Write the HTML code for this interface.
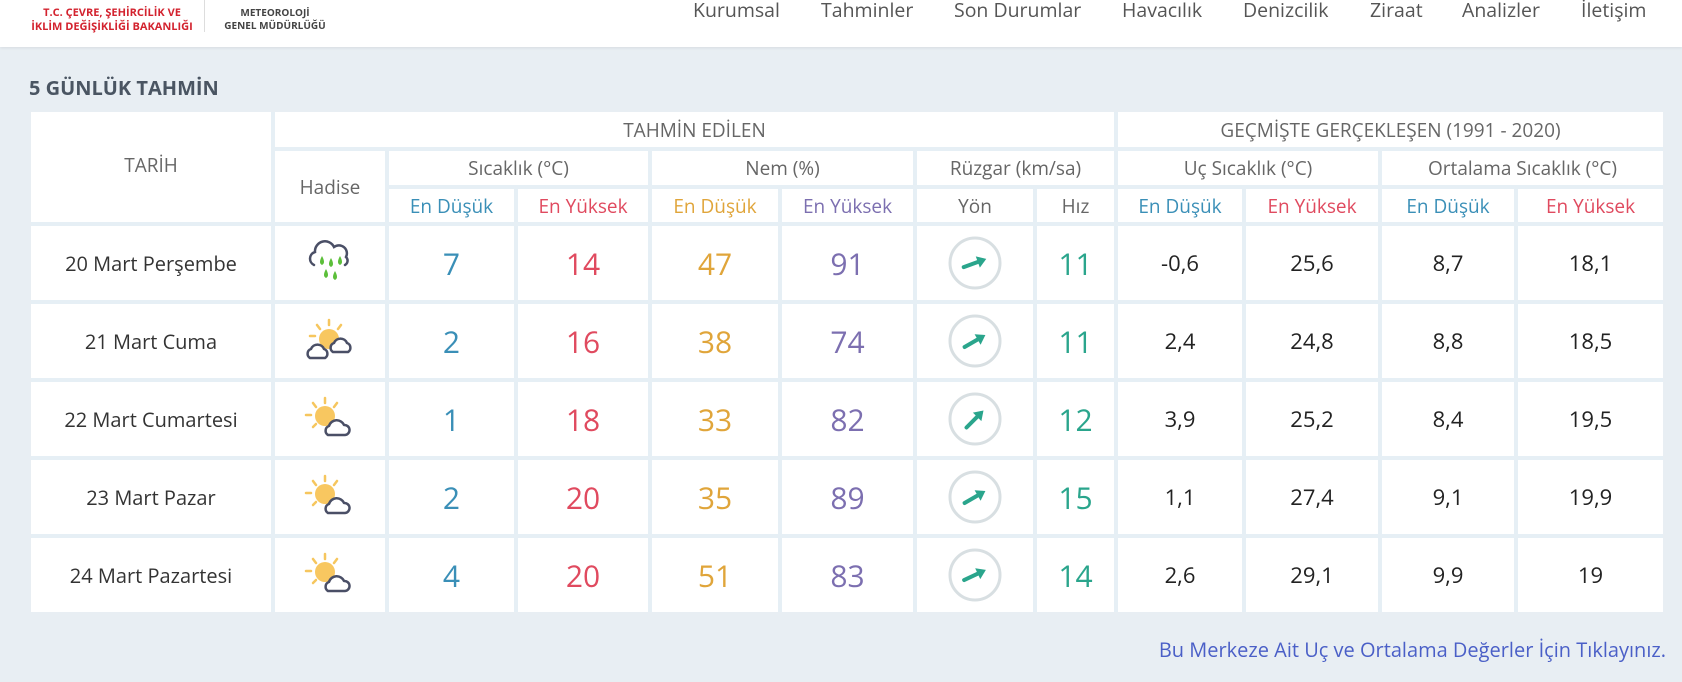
<!DOCTYPE html>
<html><head><meta charset="utf-8">
<style>
*{margin:0;padding:0;box-sizing:border-box}
body{width:1682px;height:682px;overflow:hidden;background:#e8eef3;font-family:"Open Sans","Liberation Sans",sans-serif;position:relative}
.hdr{position:absolute;left:0;top:0;width:1682px;height:47px;background:#fff;box-shadow:0 1px 3px rgba(0,0,0,.08)}
.logo1{position:absolute;left:22px;top:6px;color:#d3232f;font-weight:bold;font-size:11px;line-height:14px;text-align:center;width:180px;white-space:nowrap}
.sep{position:absolute;left:204px;top:0;width:1px;height:32px;background:#ddd}
.logo2{position:absolute;left:220px;top:6px;color:#444;font-weight:bold;font-size:10px;line-height:13px;text-align:center;width:110px;white-space:nowrap}
.nav{position:absolute;top:-4px;font-size:19.5px;color:#555}
.title{position:absolute;left:29px;top:74px;font-size:20px;font-weight:bold;color:#4a5562}
.grid{position:absolute;left:31px;top:112px;display:grid;
grid-template-columns:240px 110px 125px 130px 126px 131px 116px 77px 124px 132px 132px 145px;
grid-template-rows:35px 34px 33px 74px 74px 74px 74px 74px;column-gap:4px;row-gap:4px;background:#e6eff5}
.grid>div{background:#fff;display:flex;align-items:center;justify-content:center;color:#666;font-size:19px}
.b{color:#3a8fb7!important}.r{color:#e04a5f!important}.y{color:#e0a53a!important}.p{color:#7c6fb0!important}.t{color:#2aa58c!important}
.n{font-size:30px!important}
.k{color:#222!important;font-size:22px!important}
.dt{color:#333!important;font-size:20px!important}
.link{position:absolute;right:16px;top:636px;color:#4a5fc7;font-size:20px}
</style></head><body>
<div class="hdr">
<div class="logo1">T.C. ÇEVRE, ŞEHİRCİLİK VE<br>İKLİM DEĞİŞİKLİĞİ BAKANLIĞI</div>
<div class="sep"></div>
<div class="logo2">METEOROLOJİ<br>GENEL MÜDÜRLÜĞÜ</div>
<div class="nav" style="left:693px">Kurumsal</div>
<div class="nav" style="left:821px">Tahminler</div>
<div class="nav" style="left:954px">Son Durumlar</div>
<div class="nav" style="left:1122px">Havacılık</div>
<div class="nav" style="left:1243px">Denizcilik</div>
<div class="nav" style="left:1370px">Ziraat</div>
<div class="nav" style="left:1462px">Analizler</div>
<div class="nav" style="left:1581px">İletişim</div>
</div>
<div class="title">5 GÜNLÜK TAHMİN</div>
<div class="grid">
<div style="grid-column:1;grid-row:1/4;padding-bottom:4px">TARİH</div>
<div style="grid-column:2/9;grid-row:1">TAHMİN EDİLEN</div>
<div style="grid-column:9/13;grid-row:1">GEÇMİŞTE GERÇEKLEŞEN (1991 - 2020)</div>
<div style="grid-column:2;grid-row:2/4">Hadise</div>
<div style="grid-column:3/5;grid-row:2">Sıcaklık (°C)</div>
<div style="grid-column:5/7;grid-row:2">Nem (%)</div>
<div style="grid-column:7/9;grid-row:2">Rüzgar (km/sa)</div>
<div style="grid-column:9/11;grid-row:2">Uç Sıcaklık (°C)</div>
<div style="grid-column:11/13;grid-row:2">Ortalama Sıcaklık (°C)</div>
<div style="grid-column:3;grid-row:3" class="b">En Düşük</div>
<div style="grid-column:4;grid-row:3" class="r">En Yüksek</div>
<div style="grid-column:5;grid-row:3" class="y">En Düşük</div>
<div style="grid-column:6;grid-row:3" class="p">En Yüksek</div>
<div style="grid-column:7;grid-row:3">Yön</div>
<div style="grid-column:8;grid-row:3">Hız</div>
<div style="grid-column:9;grid-row:3" class="b">En Düşük</div>
<div style="grid-column:10;grid-row:3" class="r">En Yüksek</div>
<div style="grid-column:11;grid-row:3" class="b">En Düşük</div>
<div style="grid-column:12;grid-row:3" class="r">En Yüksek</div>

<div class="dt">20 Mart Perşembe</div>
<div><svg width="60" height="56" viewBox="0 0 60 56"><path d="M14 30 a7 7 0 0 1 1-13 a10 10 0 0 1 19-5 a8 8 0 0 1 12 10 a5 5 0 0 1 -1 8" fill="none" stroke="#4a4f66" stroke-width="2.5" stroke-linecap="round"/><path d="M22 21 q-4 7 0 9 q4-2 0-9z M31 23 q-4 7 0 9 q4-2 0-9z M40 21 q-4 7 0 9 q4-2 0-9z M26 34 q-4 7 0 9 q4-2 0-9z M35 36 q-4 7 0 9 q4-2 0-9z" fill="#5cbf3a"/></svg></div>
<div class="n b">7</div><div class="n r">14</div><div class="n y">47</div><div class="n p">91</div>
<div><svg width="56" height="56" viewBox="0 0 56 56"><circle cx="28" cy="28" r="25" fill="none" stroke="#d8dfe2" stroke-width="3"/><g transform="rotate(-20 28 28)"><path d="M16 28 H36" stroke="#2aa58c" stroke-width="4" stroke-linecap="round"/><path d="M40 28 L31 22 L31 34Z" fill="#2aa58c"/></g></svg></div>
<div class="n t">11</div>
<div class="k">-0,6</div><div class="k">25,6</div><div class="k">8,7</div><div class="k">18,1</div>

<div class="dt">21 Mart Cuma</div>
<div><svg width="60" height="50" viewBox="0 0 60 50"><g stroke="#f6c65e" stroke-width="2.5" stroke-linecap="round"><path d="M29 4v5M17 9l3 4M41 9l-3 4M10 20h5"/></g><circle cx="29" cy="23" r="10" fill="#f8c760"/><path d="M10 42 a5 5 0 0 1 1-9 a7 7 0 0 1 13 0 a5 5 0 0 1 1 9z" fill="#fff" stroke="#4a4f66" stroke-width="2.5" stroke-linejoin="round"/><path d="M33 36 a5 5 0 0 1 1-9 a7 7 0 0 1 13 0 a5 5 0 0 1 1 9z" fill="#fff" stroke="#4a4f66" stroke-width="2.5" stroke-linejoin="round"/></svg></div>
<div class="n b">2</div><div class="n r">16</div><div class="n y">38</div><div class="n p">74</div>
<div><svg width="56" height="56" viewBox="0 0 56 56"><circle cx="28" cy="28" r="25" fill="none" stroke="#d8dfe2" stroke-width="3"/><g transform="rotate(-30 28 28)"><path d="M16 28 H36" stroke="#2aa58c" stroke-width="4" stroke-linecap="round"/><path d="M40 28 L31 22 L31 34Z" fill="#2aa58c"/></g></svg></div>
<div class="n t">11</div>
<div class="k">2,4</div><div class="k">24,8</div><div class="k">8,8</div><div class="k">18,5</div>

<div class="dt">22 Mart Cumartesi</div>
<div><svg width="60" height="50" viewBox="0 0 60 50"><g stroke="#f6c65e" stroke-width="2.5" stroke-linecap="round"><path d="M25 4v5M13 9l3 4M37 9l-3 4M6 21h5M13 33l3-3"/></g><circle cx="25" cy="22" r="10" fill="#f8c760"/><path d="M28 41 a5 5 0 0 1 1-9 a8 8 0 0 1 15-1 a5 5 0 0 1 1 10z" fill="#fff" stroke="#4a4f66" stroke-width="2.5" stroke-linejoin="round"/></svg></div>
<div class="n b">1</div><div class="n r">18</div><div class="n y">33</div><div class="n p">82</div>
<div><svg width="56" height="56" viewBox="0 0 56 56"><circle cx="28" cy="28" r="25" fill="none" stroke="#d8dfe2" stroke-width="3"/><g transform="rotate(-45 28 28)"><path d="M16 28 H36" stroke="#2aa58c" stroke-width="4" stroke-linecap="round"/><path d="M40 28 L31 22 L31 34Z" fill="#2aa58c"/></g></svg></div>
<div class="n t">12</div>
<div class="k">3,9</div><div class="k">25,2</div><div class="k">8,4</div><div class="k">19,5</div>

<div class="dt">23 Mart Pazar</div>
<div><svg width="60" height="50" viewBox="0 0 60 50"><g stroke="#f6c65e" stroke-width="2.5" stroke-linecap="round"><path d="M25 4v5M13 9l3 4M37 9l-3 4M6 21h5M13 33l3-3"/></g><circle cx="25" cy="22" r="10" fill="#f8c760"/><path d="M28 41 a5 5 0 0 1 1-9 a8 8 0 0 1 15-1 a5 5 0 0 1 1 10z" fill="#fff" stroke="#4a4f66" stroke-width="2.5" stroke-linejoin="round"/></svg></div>
<div class="n b">2</div><div class="n r">20</div><div class="n y">35</div><div class="n p">89</div>
<div><svg width="56" height="56" viewBox="0 0 56 56"><circle cx="28" cy="28" r="25" fill="none" stroke="#d8dfe2" stroke-width="3"/><g transform="rotate(-30 28 28)"><path d="M16 28 H36" stroke="#2aa58c" stroke-width="4" stroke-linecap="round"/><path d="M40 28 L31 22 L31 34Z" fill="#2aa58c"/></g></svg></div>
<div class="n t">15</div>
<div class="k">1,1</div><div class="k">27,4</div><div class="k">9,1</div><div class="k">19,9</div>

<div class="dt">24 Mart Pazartesi</div>
<div><svg width="60" height="50" viewBox="0 0 60 50"><g stroke="#f6c65e" stroke-width="2.5" stroke-linecap="round"><path d="M25 4v5M13 9l3 4M37 9l-3 4M6 21h5M13 33l3-3"/></g><circle cx="25" cy="22" r="10" fill="#f8c760"/><path d="M28 41 a5 5 0 0 1 1-9 a8 8 0 0 1 15-1 a5 5 0 0 1 1 10z" fill="#fff" stroke="#4a4f66" stroke-width="2.5" stroke-linejoin="round"/></svg></div>
<div class="n b">4</div><div class="n r">20</div><div class="n y">51</div><div class="n p">83</div>
<div><svg width="56" height="56" viewBox="0 0 56 56"><circle cx="28" cy="28" r="25" fill="none" stroke="#d8dfe2" stroke-width="3"/><g transform="rotate(-25 28 28)"><path d="M16 28 H36" stroke="#2aa58c" stroke-width="4" stroke-linecap="round"/><path d="M40 28 L31 22 L31 34Z" fill="#2aa58c"/></g></svg></div>
<div class="n t">14</div>
<div class="k">2,6</div><div class="k">29,1</div><div class="k">9,9</div><div class="k">19</div>
</div>
<div class="link">Bu Merkeze Ait Uç ve Ortalama Değerler İçin Tıklayınız.</div>
</body></html>
